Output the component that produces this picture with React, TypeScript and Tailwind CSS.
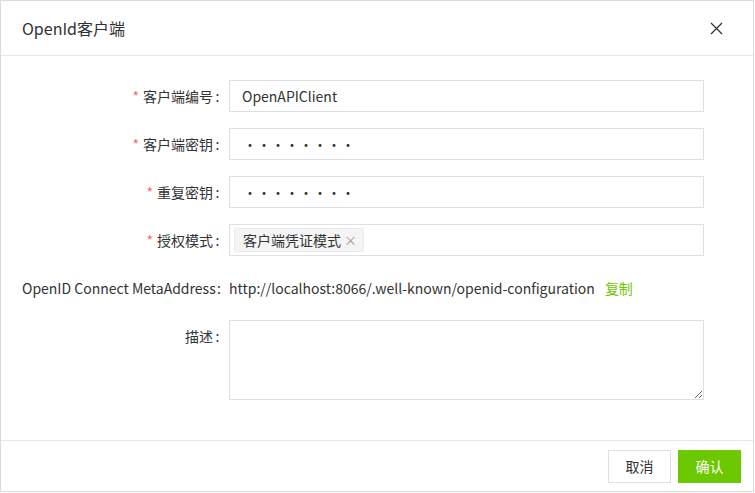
import React from "react";

const font = { fontFamily: '"Noto Sans CJK SC", "Noto Sans", sans-serif' };

function Label({ text, required }: { text: string; required?: boolean }) {
  return (
    <div className="flex w-[207px] shrink-0 justify-end pr-[7px] text-[14px] text-[#333] whitespace-nowrap leading-[32px]">
      {required && <span className="mr-[4px] text-[#f56c6c]">*</span>}
      <span>{text}</span>
      <span className="w-[9px] text-center">:</span>
    </div>
  );
}

function TextInput({ value }: { value: string }) {
  return (
    <div className="flex h-[32px] w-[475px] items-center border border-[#dcdfe6] bg-white pl-[12px] text-[14px] text-[#333]">
      {value}
    </div>
  );
}

function PasswordInput() {
  return (
    <div className="flex h-[32px] w-[475px] items-center border border-[#dcdfe6] bg-white pl-[13px] text-[14px] text-[#333]">
      <span>••••••••</span>
    </div>
  );
}

export default function App() {
  return (
    <div style={font} className="h-[492px] w-[754px] border border-[#dcdcdc] bg-white flex flex-col">
      <div className="flex h-[55px] items-center justify-between border-b border-[#e8e8e8] pl-[21px] pr-[30px]">
        <div className="text-[16px] text-[#303133]">OpenId客户端</div>
        <svg width="13" height="13" viewBox="0 0 13 13" className="text-[#333]">
          <path d="M1 1 L12 12 M12 1 L1 12" stroke="currentColor" strokeWidth="1.3" fill="none" />
        </svg>
      </div>
      <div className="flex flex-1 flex-col gap-[16px] pl-[21px] pt-[24px]">
        <div className="flex">
          <Label text="客户端编号" required />
          <TextInput value="OpenAPIClient" />
        </div>
        <div className="flex">
          <Label text="客户端密钥" required />
          <PasswordInput />
        </div>
        <div className="flex">
          <Label text="重复密钥" required />
          <PasswordInput />
        </div>
        <div className="flex">
          <Label text="授权模式" required />
          <div className="flex h-[32px] w-[475px] items-center border border-[#dcdfe6] bg-white pl-[4px]">
            <div className="flex h-[24px] items-center rounded-[2px] border border-[#ececec] bg-[#f4f4f5] pl-[8px] pr-[6px] text-[14px] text-[#333]">
              客户端凭证模式
              <span className="ml-[3px] text-[13px] text-[#999]">×</span>
            </div>
          </div>
        </div>
        <div className="flex items-center">
          <Label text="OpenID Connect MetaAddress" />
          <div className="text-[14px] text-[#333] leading-[32px]">
            http://localhost:8066/.well-known/openid-configuration
          </div>
          <div className="ml-[10px] text-[14px] text-[#6cc800] leading-[32px]">复制</div>
        </div>
        <div className="flex">
          <Label text="描述" />
          <textarea
            readOnly
            style={font}
            className="h-[80px] w-[475px] border border-[#dcdfe6] bg-white p-[8px] text-[14px] outline-none"
          />
        </div>
      </div>
      <div className="flex h-[51px] justify-end gap-[7px] border-t border-[#e8e8e8] pr-[12px] pt-[9px]">
        <button className="h-[33px] w-[63px] border border-[#dcdfe6] bg-white text-[14px] text-[#333]">取消</button>
        <button className="h-[33px] w-[63px] bg-[#6cc800] text-[14px] text-white">确认</button>
      </div>
    </div>
  );
}
